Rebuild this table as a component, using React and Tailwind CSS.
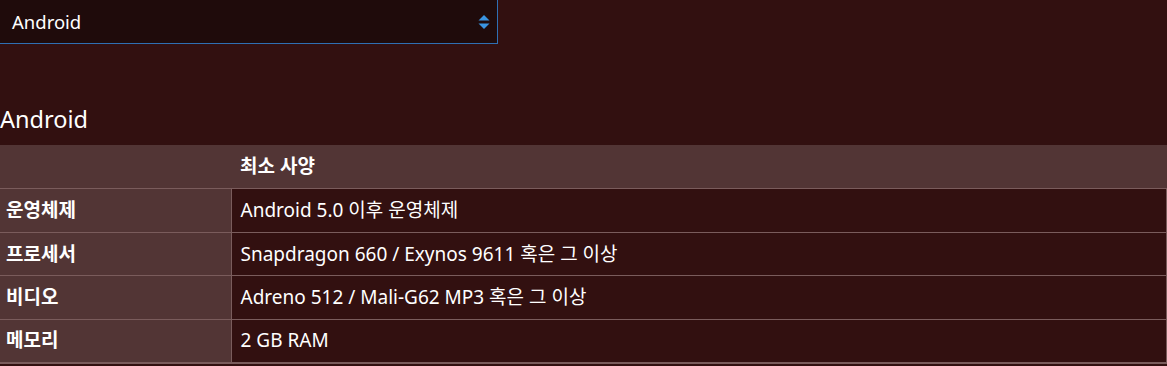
import React from 'react';

// Minimum spec table for Android
const rows = [
  { label: '운영체제', value: 'Android 5.0 이후 운영체제' },
  { label: '프로세서', value: 'Snapdragon 660 / Exynos 9611 혹은 그 이상' },
  { label: '비디오', value: 'Adreno 512 / Mali-G62 MP3 혹은 그 이상' },
  { label: '메모리', value: '2 GB RAM' },
];

function SortArrows() {
  return (
    <svg width="12" height="16" viewBox="0 0 12 16" className="text-[#3a94e0]">
      <path d="M6 1 L11.5 6.5 H0.5 Z" fill="currentColor" />
      <path d="M0.5 9.5 H11.5 L6 15 Z" fill="currentColor" />
    </svg>
  );
}

export default function App() {
  return (
    <div
      className="w-[1167px] h-[366px] overflow-hidden bg-[#321010] text-white"
      style={{ fontFamily: '"Noto Sans", "Noto Sans CJK KR", sans-serif' }}
    >
      <div className="flex items-center justify-between w-[498px] h-[44px] bg-[#1f0b0b] border-r border-b border-[#2f6fb3] pl-3 pr-[7px]">
        <span className="text-[18.5px]">Android</span>
        <SortArrows />
      </div>

      <h2 className="mt-[60px] text-[23.5px] leading-[30px]">Android</h2>

      <table className="mt-[11px] w-full border-collapse text-[19px]">
        <thead>
          <tr className="h-[43.5px] bg-[#523535]">
            <th className="w-[231px]" />
            <th className="text-left font-bold px-[9px] border-b border-[#7a5c5c]">최소 사양</th>
          </tr>
        </thead>
        <tbody>
          {rows.map((r, i) => (
            <tr key={r.label} className="h-[43.5px]">
              <th
                className={`w-[231px] bg-[#523535] text-left font-bold px-[6px] border-t border-r border-[#7a5c5c] ${
                  i === rows.length - 1 ? 'border-b-2' : ''
                }`}
              >
                {r.label}
              </th>
              <td
                className={`px-[9px] border-t border-r border-[#7a5c5c] ${
                  i === rows.length - 1 ? 'border-b-2' : ''
                }`}
              >
                {r.value}
              </td>
            </tr>
          ))}
        </tbody>
      </table>
    </div>
  );
}
